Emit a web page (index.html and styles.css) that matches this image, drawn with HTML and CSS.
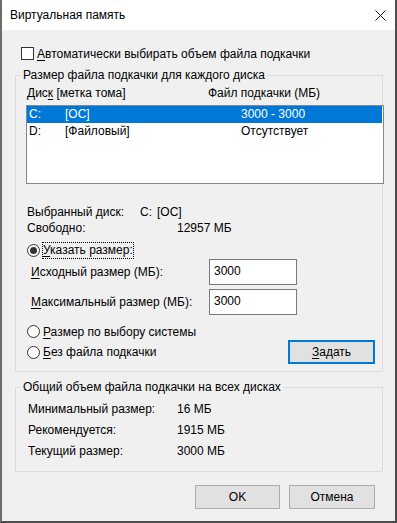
FILE: index.html
```html
<!DOCTYPE html>
<html lang="ru">
<head>
<meta charset="utf-8">
<title>Виртуальная память</title>
<link rel="stylesheet" href="styles.css">
</head>
<body>
<div class="window">
  <div class="titlebar">
    <span class="title">Виртуальная память</span>
    <svg class="close" width="11" height="11" viewBox="0 0 11 11"><path d="M0.5 0.5 L10.5 10.5 M10.5 0.5 L0.5 10.5" stroke="#111" stroke-width="1" fill="none"/></svg>
  </div>
  <div class="body">
    <div class="check-row"><span class="checkbox"></span><span><u>А</u>втоматически выбирать объем файла подкачки</span></div>

    <fieldset class="group">
      <legend>Размер файла подкачки для каждого диска</legend>
      <div class="group-inner group-drives">
        <div class="list-head"><span>Дис<u>к</u> [метка тома]</span><span>Файл подкачки (МБ)</span></div>
        <div class="listbox">
          <div class="list-row selected"><span>C:</span><span>[OC]</span><span>3000 - 3000</span></div>
          <div class="list-row"><span>D:</span><span>[Файловый]</span><span>Отсутствует</span></div>
        </div>
        <div class="info-row info-first"><span class="lbl-drive">Выбранный диск:</span><span class="drive-letter">C:</span><span>[OC]</span></div>
        <div class="info-row"><span class="lbl-free">Свободно:</span><span>12957 МБ</span></div>
        <div class="radio-row radio-custom"><span class="radio checked"></span><span class="focus"><u>У</u>казать размер:</span></div>
        <div class="field-row"><span class="field-label"><u>И</u>сходный размер (МБ):</span><span class="input">3000</span></div>
        <div class="field-row field-second"><span class="field-label"><u>М</u>аксимальный размер (МБ):</span><span class="input">3000</span></div>
        <div class="radio-row radio-system"><span class="radio"></span><span><u>Р</u>азмер по выбору системы</span></div>
        <div class="radio-row radio-none"><span class="radio"></span><span><u>Б</u>ез файла подкачки</span><span class="btn btn-default btn-set"><u>З</u>адать</span></div>
      </div>
    </fieldset>

    <fieldset class="group group-total">
      <legend>Общий объем файла подкачки на всех дисках</legend>
      <div class="group-inner totals">
        <div class="total-row"><span class="total-label">Минимальный размер:</span><span>16 МБ</span></div>
        <div class="total-row"><span class="total-label">Рекомендуется:</span><span>1915 МБ</span></div>
        <div class="total-row"><span class="total-label">Текущий размер:</span><span>3000 МБ</span></div>
      </div>
    </fieldset>

    <div class="buttons">
      <span class="btn btn-ok">OK</span>
      <span class="btn btn-cancel">Отмена</span>
    </div>
  </div>
</div>
</body>
</html>
```

FILE: styles.css
```css
* { box-sizing: border-box; }
html, body { margin: 0; padding: 0; background: #f0f0f0; }
body {
  font-family: "Liberation Sans", Arial, sans-serif;
  font-size: 12px;
  line-height: 16px;
  color: #000;
}
u { text-decoration: underline; text-underline-offset: 2px; }

.window {
  width: 397px;
  height: 523px;
  background: #f0f0f0;
  border-left: 2px solid #6c6c6c;
  border-right: 2px solid #4c4c4c;
  border-bottom: 2px solid #4c4c4c;
  display: flex;
  flex-direction: column;
}

.titlebar {
  height: 30px;
  flex: none;
  background: #fff;
  display: flex;
  align-items: center;
  padding-left: 8px;
  padding-right: 8px;
}
.title { flex: 1; }
.close { display: block; margin-right: 1px; }

.body {
  padding: 0 12px 0 13px;
  display: flex;
  flex-direction: column;
}

.check-row {
  display: flex;
  align-items: center;
  height: 13px;
  margin-top: 17px;
  margin-left: 6px;
  gap: 3px;
}
.checkbox {
  width: 13px;
  height: 13px;
  border: 1px solid #333;
  background: #fff;
  flex: none;
}

.group {
  margin: 7px 0 0 0;
  padding: 0;
  border: 1px solid #dcdcdc;
  min-width: 0;
}
.group legend {
  margin-left: 5px;
  padding: 0 2px;
  line-height: 16px;
}
.group-inner { padding-left: 10px; }

.group-drives { padding-bottom: 7px; }

.list-head {
  display: grid;
  grid-template-columns: 181px 1fr;
  margin-top: 2px;
  padding-left: 1px;
}

.listbox {
  margin-top: 4px;
  width: 358px;
  height: 79px;
  background: #fff;
  border: 1px solid #828790;
}
.list-row {
  display: grid;
  grid-template-columns: 36px 176px 1fr;
  height: 17px;
  line-height: 17px;
  margin: 0 1px 0 0;
  padding-left: 2px;
}
.list-row.selected {
  background: #0078d7;
  color: #fff;
}

.info-row { display: flex; padding-left: 1px; }
.info-first { margin-top: 20px; }
.lbl-drive { width: 113px; }
.drive-letter { width: 17px; }
.lbl-free { width: 150px; }

.radio-row {
  display: flex;
  align-items: center;
  padding-left: 1px;
}
.radio {
  width: 13px;
  height: 13px;
  border: 1px solid #333;
  border-radius: 50%;
  background: #fff;
  flex: none;
  margin-right: 3px;
  position: relative;
}
.radio.checked::after {
  content: "";
  position: absolute;
  left: 2px;
  top: 2px;
  width: 7px;
  height: 7px;
  border-radius: 50%;
  background: #333;
}
.radio-custom { margin-top: 6px; height: 17px; }
.focus {
  outline: 1px dotted #000;
  outline-offset: -1px;
  padding: 0 1px;
  margin-left: -1px;
  line-height: 17px;
}
.radio-system { margin-top: 8px; height: 17px; }
.radio-none { height: 24px; margin-top: 0; }

.field-row {
  display: flex;
  align-items: center;
  height: 26px;
  padding-left: 5px;
}
.field-second { margin-top: 4px; }
.field-label { width: 178px; }
.input {
  width: 88px;
  height: 26px;
  background: #fff;
  border: 1px solid #7a7a7a;
  padding: 3px 0 0 4px;
  line-height: 16px;
}

.btn {
  display: flex;
  align-items: center;
  justify-content: center;
  height: 24px;
  background: #e1e1e1;
  border: 1px solid #adadad;
}
.btn-default { border: 2px solid #0078d7; }
.btn-set {
  width: 87px;
  margin-left: auto;
  margin-right: 7px;
}

.group-total { margin-top: 7px; }
.totals {
  padding-left: 12px;
  padding-top: 6px;
  padding-bottom: 12px;
  display: flex;
  flex-direction: column;
  gap: 5px;
}
.total-row { display: flex; }
.total-label { width: 149px; }

.buttons {
  display: flex;
  justify-content: flex-end;
  gap: 9px;
  margin-top: 13px;
  margin-right: 8px;
}
.btn-ok { width: 85px; }
.btn-cancel { width: 86px; }
```
